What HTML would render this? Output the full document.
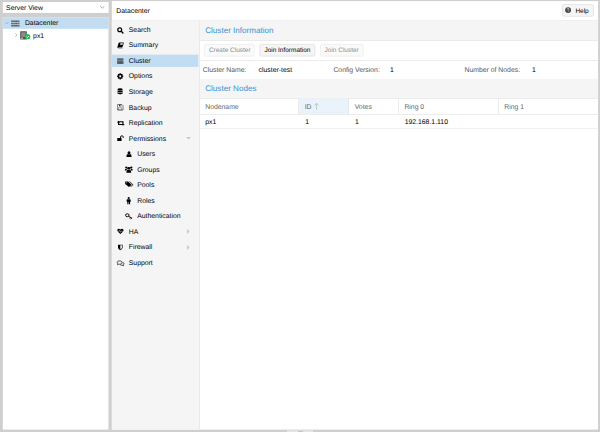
<!DOCTYPE html>
<html>
<head>
<meta charset="utf-8">
<style>
html,body{margin:0;padding:0;}
body{width:600px;height:432px;overflow:hidden;background:#cfcfcf;font-family:"Liberation Sans",sans-serif;font-size:6.85px;color:#000;position:relative;text-rendering:geometricPrecision;}
.t{position:absolute;white-space:nowrap;line-height:10px;height:10px;}
.blue{color:#3892d4;font-size:8.1px;}
.b{font-size:6.48px;}
.gray{color:#8c8c8c;}
svg{position:absolute;overflow:visible;}
</style>
</head>
<body>
<svg style="left:0;top:0" width="600" height="432" viewBox="0 0 600 432">
<rect x="2.8" y="2.0" width="105.85" height="10.90" fill="#fff" />
<rect x="2.8" y="17.2" width="105.65" height="412.40" fill="#fff" />
<rect x="2.8" y="17.2" width="105.65" height="11.60" fill="#c2ddf2" />
<rect x="111.85" y="1.1" width="486.25" height="428.50" fill="#fff" />
<rect x="111.85" y="20" width="486.25" height="0.55" fill="#dcdcdc" />
<rect x="111.85" y="20.55" width="87.55" height="409.05" fill="#f5f5f5" />
<rect x="199.4" y="20.55" width="0.55" height="409.05" fill="#dcdcdc" />
<rect x="562.47" y="4.369999999999999" width="31.06" height="11.96" rx="1.6" fill="#f5f5f5" stroke="#d6d6d6" stroke-width="0.55"/>
<rect x="111.85" y="54.650000000000006" width="86.50" height="12.25" fill="#c2ddf2" />
<rect x="199.95" y="20.55" width="398.15" height="19.65" fill="#f5f5f5" />
<rect x="199.95" y="40.2" width="398.15" height="0.55" fill="#dcdcdc" />
<rect x="204.37" y="44.370000000000005" width="49.96" height="11.76" rx="1.6" fill="#fafafa" stroke="#e6e6e6" stroke-width="0.55"/>
<rect x="259.87" y="44.370000000000005" width="55.06" height="11.76" rx="1.6" fill="#f5f5f5" stroke="#d6d6d6" stroke-width="0.55"/>
<rect x="320.46999999999997" y="44.370000000000005" width="42.66" height="11.76" rx="1.6" fill="#fafafa" stroke="#e6e6e6" stroke-width="0.55"/>
<rect x="199.95" y="60.3" width="398.15" height="0.55" fill="#dcdcdc" />
<rect x="199.95" y="78.8" width="398.15" height="19.20" fill="#f5f5f5" />
<rect x="199.95" y="98" width="398.15" height="0.55" fill="#dcdcdc" />
<rect x="298.7" y="98.55" width="50.00" height="15.45" fill="#eaf3fb" />
<rect x="298.45" y="98.55" width="0.55" height="15.45" fill="#dcdcdc" />
<rect x="348.45" y="98.55" width="0.55" height="15.45" fill="#dcdcdc" />
<rect x="398.45" y="98.55" width="0.55" height="15.45" fill="#dcdcdc" />
<rect x="498.35" y="98.55" width="0.55" height="15.45" fill="#dcdcdc" />
<rect x="199.95" y="114" width="398.15" height="0.55" fill="#dcdcdc" />
<rect x="199.95" y="128.1" width="398.15" height="0.55" fill="#e6e6e6" />
<rect x="287" y="430.3" width="26.00" height="1.70" fill="#e6e6e6" />
<rect x="298" y="430.9" width="5.00" height="1.10" fill="#c4c4c4" />
</svg>
<div class="t " style="left:6.1px;top:4.00px;">Server View</div>
<svg style="left:100.3px;top:6.0px" width="4.6" height="2.5" viewBox="0 0 4.6 2.5"><path d="M0.2 0.2 L2.3 2.2 L4.4 0.2" fill="none" stroke="#8a8a8a" stroke-width="0.75"/></svg>
<svg style="left:5.2px;top:22px" width="4" height="2.4" viewBox="0 0 4 2.4"><path d="M0.2 0.2 L2 2 L3.8 0.2" fill="none" stroke="#999" stroke-width="0.55"/></svg>
<svg style="left:11.2px;top:19.70px" width="8.7" height="7.2" viewBox="0 0 16 16" preserveAspectRatio="none"><rect x="0.3" y="1.3" width="15.4" height="3.4" rx="0.5" fill="#5c5c5c"/><rect x="0.3" y="6.3" width="15.4" height="3.4" rx="0.5" fill="#5c5c5c"/><rect x="0.3" y="11.3" width="15.4" height="3.4" rx="0.5" fill="#5c5c5c"/><path d="M2 3 H8.5 M2 8 H8.5 M2 13 H8.5" stroke="#999" stroke-width="0.9"/><path d="M11.5 3 H14 M11.5 8 H14 M11.5 13 H14" stroke="#bbb" stroke-width="1"/></svg>
<div class="t " style="left:24.9px;top:19.00px;">Datacenter</div>
<svg style="left:15.2px;top:33px" width="2.4" height="4" viewBox="0 0 2.4 4"><path d="M0.2 0.2 L2 2 L0.2 3.8" fill="none" stroke="#999" stroke-width="0.55"/></svg>
<svg style="left:19.9px;top:31.00px" width="7.0" height="8.6" viewBox="0 0 16 16" preserveAspectRatio="none"><rect x="0.4" y="0.4" width="15.2" height="15.2" rx="0.8" fill="#555"/><rect x="3" y="2.4" width="10" height="8.6" fill="#8c8c8c"/><rect x="2.6" y="12.6" width="4" height="1.6" fill="#fff"/></svg>
<svg style="left:24.6px;top:34px" width="5.4" height="5.4" viewBox="0 0 10 10"><circle cx="5" cy="5" r="4.8" fill="#21bf4b"/><path d="M2.6 5.2 L4.4 6.9 L7.5 3.4" fill="none" stroke="#fff" stroke-width="1.5"/></svg>
<div class="t " style="left:33.1px;top:32.00px;">px1</div>
<div class="t " style="left:116.3px;top:7.00px;">Datacenter</div>
<svg style="left:565.3px;top:7.20px" width="6.2" height="6.2" viewBox="0 0 16 16" preserveAspectRatio="none"><circle cx="8" cy="8" r="7.6" fill="#444"/><path d="M5.6 6.2 Q5.8 3.8 8.1 3.8 Q10.5 3.9 10.5 6 Q10.5 7.2 9.2 7.9 Q8.2 8.5 8.2 9.6" fill="none" stroke="#f5f5f5" stroke-width="1.8"/><circle cx="8.2" cy="12.1" r="1.1" fill="#f5f5f5"/></svg>
<div class="t b" style="left:575.4px;top:7.00px;">Help</div>
<svg style="left:117.0px;top:26.69px" width="6.6" height="6.6" viewBox="0 0 16 16" preserveAspectRatio="none"><circle cx="6.6" cy="6.6" r="4.7" fill="none" stroke="#000" stroke-width="3"/><path d="M10.4 10.4 L14.4 14.4" stroke="#000" stroke-width="3.4" stroke-linecap="round"/></svg>
<div class="t " style="left:128.8px;top:26.00px;">Search</div>
<svg style="left:117.0px;top:41.77px" width="6.8" height="6.6" viewBox="0 0 16 16" preserveAspectRatio="none"><path d="M5.4 1.2 L15.4 1.2 Q16.4 1.2 16 2.4 L13.4 11.2 Q13.1 12.2 12.1 12.2 L3.2 12.2 Q2.8 13 3.6 13.4 L12.8 13.4 L13 15 L3 15 Q0.4 14.6 1 12 L3.8 2.6 Q4.2 1.2 5.4 1.2 Z" fill="#000"/><path d="M8.2 3 L14.2 3 L13.2 6.6 L7.2 6.6 Z" fill="#f5f5f5"/></svg>
<div class="t " style="left:128.8px;top:41.00px;">Summary</div>
<svg style="left:116.7px;top:57.60px" width="6.6" height="6.2" viewBox="0 0 16 16" preserveAspectRatio="none"><rect x="0.3" y="1.3" width="15.4" height="3.4" rx="0.5" fill="#2a2a2a"/><rect x="0.3" y="6.3" width="15.4" height="3.4" rx="0.5" fill="#2a2a2a"/><rect x="0.3" y="11.3" width="15.4" height="3.4" rx="0.5" fill="#2a2a2a"/><path d="M2 3 H8.5 M2 8 H8.5 M2 13 H8.5" stroke="#999" stroke-width="0.9"/><path d="M11.5 3 H14 M11.5 8 H14 M11.5 13 H14" stroke="#bbb" stroke-width="1"/></svg>
<div class="t " style="left:128.8px;top:57.00px;">Cluster</div>
<svg style="left:117.3px;top:72.93px" width="6.4" height="6.6" viewBox="0 0 16 16" preserveAspectRatio="none"><rect x="6.3" y="0.4" width="3.4" height="4" rx="0.5" fill="#000" transform="rotate(0 8 8)"/><rect x="6.3" y="0.4" width="3.4" height="4" rx="0.5" fill="#000" transform="rotate(45 8 8)"/><rect x="6.3" y="0.4" width="3.4" height="4" rx="0.5" fill="#000" transform="rotate(90 8 8)"/><rect x="6.3" y="0.4" width="3.4" height="4" rx="0.5" fill="#000" transform="rotate(135 8 8)"/><rect x="6.3" y="0.4" width="3.4" height="4" rx="0.5" fill="#000" transform="rotate(180 8 8)"/><rect x="6.3" y="0.4" width="3.4" height="4" rx="0.5" fill="#000" transform="rotate(225 8 8)"/><rect x="6.3" y="0.4" width="3.4" height="4" rx="0.5" fill="#000" transform="rotate(270 8 8)"/><rect x="6.3" y="0.4" width="3.4" height="4" rx="0.5" fill="#000" transform="rotate(315 8 8)"/><circle cx="8" cy="8" r="5.9" fill="#000"/><circle cx="8" cy="8" r="2.7" fill="#f5f5f5"/></svg>
<div class="t " style="left:128.8px;top:72.00px;">Options</div>
<svg style="left:117.4px;top:88.26px" width="6.2" height="7.0" viewBox="0 0 16 16" preserveAspectRatio="none"><ellipse cx="8" cy="3.3" rx="6.8" ry="2.9" fill="#000"/><path d="M1.2 5.6 Q8 8.6 14.8 5.6 V8.6 Q8 11.6 1.2 8.6 Z" fill="#000"/><path d="M1.2 9.9 Q8 12.9 14.8 9.9 V12.6 Q8 15.6 1.2 12.6 Z" fill="#000"/><path d="M1.2 13.9 Q8 16.9 14.8 13.9 Q8 17.6 1.2 13.9 Z" fill="#000"/></svg>
<div class="t " style="left:128.8px;top:88.00px;">Storage</div>
<svg style="left:117.3px;top:103.99px" width="6.6" height="6.6" viewBox="0 0 16 16" preserveAspectRatio="none"><path d="M1.3 1.3 H12 L14.7 4 V14.7 H1.3 Z" fill="none" stroke="#222" stroke-width="1.3" stroke-linejoin="round"/><rect x="5" y="1.3" width="5.4" height="4.4" fill="#222"/><rect x="7.6" y="2.2" width="1.5" height="2.6" fill="#f5f5f5"/><rect x="4.2" y="9.4" width="7.6" height="5" fill="none" stroke="#444" stroke-width="1"/></svg>
<div class="t " style="left:128.8px;top:104.00px;">Backup</div>
<svg style="left:116.7px;top:119.62px" width="7.5" height="6.4" viewBox="0 0 16 16" preserveAspectRatio="none"><path d="M3.4 5 V11.4 H11" fill="none" stroke="#000" stroke-width="2.5"/><path d="M-0.4 6.2 L3.4 1.6 L7.2 6.2 Z" fill="#000"/><path d="M12.6 11 V4.6 H5" fill="none" stroke="#000" stroke-width="2.5"/><path d="M8.8 9.8 L12.6 14.4 L16.4 9.8 Z" fill="#000"/></svg>
<div class="t " style="left:128.8px;top:119.00px;">Replication</div>
<svg style="left:117.0px;top:134.75px" width="6.9" height="6.6" viewBox="0 0 16 16" preserveAspectRatio="none"><rect x="0.6" y="7" width="10" height="7.6" rx="0.8" fill="#000"/><path d="M8.2 7.4 V5 A3.1 3.1 0 0 1 14.4 5 V7.2" fill="none" stroke="#000" stroke-width="2.2"/></svg>
<div class="t " style="left:128.8px;top:135.00px;">Permissions</div>
<svg style="left:126.0px;top:150.68px" width="6.0" height="6.2" viewBox="0 0 16 16" preserveAspectRatio="none"><circle cx="8" cy="4.6" r="3.9" fill="#000"/><path d="M1 14.6 Q1 8.2 5 7.6 Q8 9.4 11 7.6 Q15 8.2 15 14.6 Q15 15.4 14 15.4 H2 Q1 15.4 1 14.6 Z" fill="#000"/></svg>
<div class="t " style="left:137.20000000000002px;top:150.00px;">Users</div>
<svg style="left:125.10000000000001px;top:166.01px" width="7.6" height="6.8" viewBox="0 0 16 16" preserveAspectRatio="none"><circle cx="8" cy="5.4" r="3.3" fill="#000"/><path d="M2.8 15.6 Q2.6 9.4 5.8 8.6 Q8 10.2 10.2 8.6 Q13.4 9.4 13.2 15.6 Z" fill="#000"/><circle cx="2.8" cy="3.6" r="2.5" fill="#000"/><circle cx="13.2" cy="3.6" r="2.5" fill="#000"/><path d="M-0.4 10.6 Q-0.6 6.4 2 6.2 Q3.4 7.2 4.8 7.2 Q3.2 8.6 3 10.6 Z" fill="#000"/><path d="M16.4 10.6 Q16.6 6.4 14 6.2 Q12.6 7.2 11.2 7.2 Q12.8 8.6 13 10.6 Z" fill="#000"/></svg>
<div class="t " style="left:137.20000000000002px;top:166.00px;">Groups</div>
<svg style="left:125.10000000000001px;top:181.34px" width="8.0" height="6.6" viewBox="0 0 16 16" preserveAspectRatio="none"><path d="M0.4 1.4 H6 L12.8 8.2 Q13.5 8.9 12.8 9.6 L8.6 13.8 Q7.9 14.5 7.2 13.8 L0.4 7 Z" fill="#000"/><circle cx="3.2" cy="4.2" r="1.1" fill="#f5f5f5"/><path d="M8 1.4 H9.6 L16.4 8.2 Q17.1 8.9 16.4 9.6 L12.2 13.8 Q11.5 14.5 10.8 13.8 L10.6 13.6 L14.6 9.6 Q15.3 8.9 14.6 8.2 Z" fill="#000"/></svg>
<div class="t " style="left:137.20000000000002px;top:181.00px;">Pools</div>
<svg style="left:125.10000000000001px;top:196.87px" width="7.4" height="7.2" viewBox="0 0 16 16" preserveAspectRatio="none"><circle cx="8" cy="2.4" r="2.3" fill="#000"/><path d="M3.6 6.6 Q3.6 5 5.2 5 H10.8 Q12.4 5 12.4 6.6 V10.8 H11 V16 H8.5 V11.4 H7.5 V16 H5 V10.8 H3.6 Z" fill="#000"/></svg>
<div class="t " style="left:137.20000000000002px;top:197.00px;">Roles</div>
<svg style="left:125.2px;top:213.10px" width="7.4" height="6.6" viewBox="0 0 16 16" preserveAspectRatio="none"><ellipse cx="5" cy="5.4" rx="3.9" ry="3.5" fill="none" stroke="#000" stroke-width="2.1"/><path d="M8 7.6 L14.6 12.6 M11.6 10.4 L10.2 12.4 M14 12.2 L12.6 14.4" stroke="#000" stroke-width="1.9" stroke-linecap="round"/></svg>
<div class="t " style="left:137.20000000000002px;top:212.00px;">Authentication</div>
<svg style="left:117.0px;top:228.33px" width="6.8" height="6.4" viewBox="0 0 16 16" preserveAspectRatio="none"><path d="M8 15 L1.6 8.8 Q-0.6 6 1.4 3.2 Q4.2 0.2 8 3.6 Q11.8 0.2 14.6 3.2 Q16.6 6 14.4 8.8 Z" fill="#000"/><path d="M0.6 8.2 H4.6 L6 5.6 L8 10.8 L10 7 L10.8 8.2 H15.4" fill="none" stroke="#f5f5f5" stroke-width="1.1" stroke-linejoin="round"/></svg>
<div class="t " style="left:128.8px;top:228.00px;">HA</div>
<svg style="left:117.0px;top:244.06px" width="6.6" height="6.6" viewBox="0 0 16 16" preserveAspectRatio="none"><path d="M2.4 1.6 H13.6 V8.6 Q13.6 12.4 8 15.4 Q2.4 12.4 2.4 8.6 Z" fill="#000"/><path d="M8 3.2 H12 V8.6 Q12 11.4 8 13.6 Z" fill="#f5f5f5"/></svg>
<div class="t " style="left:128.8px;top:243.00px;">Firewall</div>
<svg style="left:116.8px;top:259.89px" width="7.0" height="6.6" viewBox="0 0 16 16" preserveAspectRatio="none"><path d="M6 2.2 C9.4 2.2 11.6 3.9 11.6 6.2 C11.6 8.5 9.4 10.2 6 10.2 C5.4 10.2 4.8 10.1 4.4 10 Q3 11.1 1 11.4 Q2.1 10.3 2.2 9.1 Q0.4 8 0.4 6.2 C0.4 3.9 2.6 2.2 6 2.2 Z" fill="none" stroke="#000" stroke-width="1.6" stroke-linejoin="round"/><path d="M12.8 5.4 Q15.8 6.5 15.8 9 Q15.8 10.7 14.1 11.8 Q14.2 12.9 15.2 14 Q13.2 13.8 11.9 12.6 Q9.2 13.1 7.4 11.6" fill="none" stroke="#000" stroke-width="1.6" stroke-linejoin="round"/></svg>
<div class="t " style="left:128.8px;top:259.00px;">Support</div>
<svg style="left:185.6px;top:137.35px" width="5" height="2.6" viewBox="0 0 5 2.6"><path d="M0 0 H5 L2.5 2.6 Z" fill="#c8c8c8"/></svg>
<svg style="left:186.8px;top:229.13px" width="2.6" height="5" viewBox="0 0 2.6 5"><path d="M0 0 V5 L2.6 2.5 Z" fill="#c8c8c8"/></svg>
<svg style="left:186.8px;top:244.66px" width="2.6" height="5" viewBox="0 0 2.6 5"><path d="M0 0 V5 L2.6 2.5 Z" fill="#c8c8c8"/></svg>
<div class="t blue" style="left:205.2px;top:26.00px;">Cluster Information</div>
<div class="t b gray" style="left:208.9px;top:46.00px;">Create Cluster</div>
<div class="t b" style="left:264.4px;top:46.00px;">Join Information</div>
<div class="t b gray" style="left:324.6px;top:46.00px;">Join Cluster</div>
<div class="t " style="left:202.7px;top:66.00px;color:#555">Cluster Name:</div>
<div class="t " style="left:258.6px;top:66.00px;">cluster-test</div>
<div class="t " style="left:333.4px;top:66.00px;color:#555">Config Version:</div>
<div class="t " style="left:390px;top:66.00px;">1</div>
<div class="t " style="left:464.5px;top:66.00px;color:#555">Number of Nodes:</div>
<div class="t " style="left:532px;top:66.00px;">1</div>
<div class="t blue" style="left:205.2px;top:84.00px;">Cluster Nodes</div>
<div class="t " style="left:205.2px;top:103.00px;color:#666">Nodename</div>
<div class="t " style="left:304.7px;top:103.00px;color:#666">ID</div>
<div class="t " style="left:354.7px;top:103.00px;color:#666">Votes</div>
<div class="t " style="left:404.4px;top:103.00px;color:#666">Ring 0</div>
<div class="t " style="left:504.2px;top:103.00px;color:#666">Ring 1</div>
<svg style="left:313.6px;top:102.6px" width="5" height="6.8" viewBox="0 0 5 6.8"><path d="M2.5 0.4 V6.8 M0.3 2.6 L2.5 0.4 L4.7 2.6" fill="none" stroke="#aaa" stroke-width="0.6"/></svg>
<div class="t " style="left:205.2px;top:118.00px;">px1</div>
<div class="t " style="left:305.3px;top:118.00px;">1</div>
<div class="t " style="left:354.9px;top:118.00px;">1</div>
<div class="t " style="left:404.7px;top:118.00px;">192.168.1.110</div>
</body>
</html>
